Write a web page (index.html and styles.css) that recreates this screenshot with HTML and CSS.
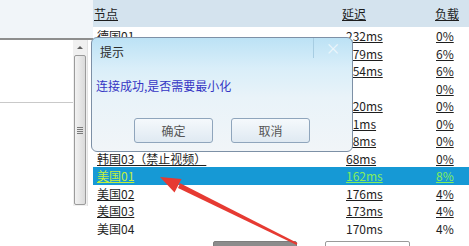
FILE: index.html
```html
<!DOCTYPE html>
<html lang="zh-CN">
<head>
    <meta charset="UTF-8">
    <title>节点列表</title>
    <link rel="stylesheet" href="styles.css">
</head>
<body>
    <div class="app">
        <div class="side">
            <div class="side-top"></div>
            <div class="side-rule"></div>
            <div class="side-body">
                <div class="side-list">
                    <div class="side-item"></div>
                </div>
                <div class="scrollbar">
                    <div class="scroll-up"></div>
                    <div class="scroll-thumb"><span class="grip"></span></div>
                </div>
            </div>
        </div>

        <div class="nodes">
            <div class="nodes-head">
                <span>节点</span>
                <span>延迟</span>
                <span>负载</span>
            </div>
            <div class="row"><span>德国01</span><span>232ms</span><span>0%</span></div>
            <div class="row"><span>德国02</span><span>179ms</span><span>6%</span></div>
            <div class="row"><span>法国01</span><span>154ms</span><span>6%</span></div>
            <div class="row"><span>法国02</span><span></span><span>0%</span></div>
            <div class="row"><span>英国01</span><span>120ms</span><span>0%</span></div>
            <div class="row"><span>韩国01</span><span>71ms</span><span>0%</span></div>
            <div class="row"><span>韩国02</span><span>88ms</span><span>0%</span></div>
            <div class="row"><span>韩国03（禁止视频）</span><span>68ms</span><span>0%</span></div>
            <div class="row selected"><span>美国01</span><span>162ms</span><span>8%</span></div>
            <div class="row"><span>美国02</span><span>176ms</span><span>4%</span></div>
            <div class="row"><span>美国03</span><span>173ms</span><span>4%</span></div>
            <div class="row plain"><span>美国04</span><span>170ms</span><span>4%</span></div>
            <div class="nodes-foot">
                <div class="foot-btn dark"></div>
                <div class="foot-btn"></div>
            </div>
        </div>
    </div>

    <div class="dialog">
        <div class="dialog-title">
            <span class="dialog-caption">提示</span>
            <span class="dialog-close">×</span>
        </div>
        <div class="dialog-msg">连接成功,是否需要最小化</div>
        <div class="dialog-buttons">
            <button class="btn">确定</button>
            <button class="btn">取消</button>
        </div>
    </div>

    <svg class="arrow" width="469" height="246" viewBox="0 0 469 246">
        <polygon points="296.6,245 297.4,243 180.2,183.3 178,188.1" fill="#e63a32"/>
        <polygon points="160,177 181.5,179 174.5,192.5" fill="#e63a32"/>
    </svg>
</body>
</html>
```

FILE: styles.css
```css
body {
    margin: 0;
    width: 469px;
    height: 246px;
    overflow: hidden;
    position: relative;
    background-color: #fff;
    font-family: "Noto Sans CJK SC", "Noto Sans", sans-serif;
    font-size: 12px;
    color: #1e1e1e;
}

.app {
    display: grid;
    grid-template-columns: 93px 1fr;
    height: 246px;
}

/* left panel */
.side-top {
    height: 38px;
    background-color: #f1f5f9;
}

.side-rule {
    height: 2px;
    background-color: #8e8e8e;
}

.side-body {
    display: flex;
}

.side-list {
    width: 73px;
}

.side-item {
    height: 62px;
    border-bottom: 1px solid #c9c9c9;
}

.scrollbar {
    width: 14px;
    height: 166px;
    background-color: #f0f0f0;
    border-right: 1px solid #e2e2e2;
}

.scroll-up {
    height: 15px;
    display: flex;
    justify-content: center;
    align-items: center;
}

.scroll-up::before {
    content: "";
    border-left: 3px solid transparent;
    border-right: 3px solid transparent;
    border-bottom: 3px solid #606060;
}

.scroll-thumb {
    box-sizing: border-box;
    height: 150px;
    margin: 0 1px;
    border: 1px solid #9b9b9b;
    border-radius: 2px;
    background: linear-gradient(to right, #f2f2f2, #dadada);
    display: flex;
    justify-content: center;
    align-items: center;
}

.grip {
    width: 6px;
    height: 7px;
    background: repeating-linear-gradient(to bottom, #7a7a7a 0, #7a7a7a 1px, transparent 1px, transparent 2px);
}

/* node table */
.nodes-head {
    display: grid;
    grid-template-columns: 248px 93px 1fr;
    height: 27px;
    align-items: center;
    padding-left: 1px;
    background-color: #d4e3ee;
}

.nodes-head span,
.row span {
    text-decoration: underline;
}

.row {
    display: grid;
    grid-template-columns: 249px 90px 1fr;
    height: 17.5px;
    line-height: 17.5px;
    padding-left: 4px;
}

.row.plain span {
    text-decoration: none;
}

.row.selected {
    background-color: #1699d5;
    color: #84ee5c;
}

.row.selected span:first-child {
    color: #c4f03a;
}

.nodes-foot {
    display: flex;
    gap: 28px;
    margin-top: 4px;
    padding-left: 120px;
}

.foot-btn {
    box-sizing: border-box;
    width: 85px;
    height: 12px;
    border: 1px solid #9a9a9a;
    border-radius: 2px;
    background-color: #fff;
}

.foot-btn.dark {
    width: 84px;
    background-color: #8c8c8c;
    border-color: #7d7d7d;
}

/* message box */
.dialog {
    position: absolute;
    left: 91px;
    top: 37px;
    width: 262px;
    height: 115px;
    box-sizing: border-box;
    border: 1px solid #7d90a6;
    border-radius: 6px;
    background: linear-gradient(to bottom, #bce2f5 0, #d9eef9 30px, #e9f3f9 60px, #f1f5f8 100%);
}

.dialog-title {
    display: flex;
    justify-content: space-between;
    height: 30px;
}

.dialog-caption {
    padding-left: 8px;
    line-height: 28px;
    color: #2a2a2a;
}

.dialog-close {
    width: 38px;
    height: 20px;
    line-height: 19px;
    text-align: center;
    font-size: 15px;
    color: #eef7fc;
    border-left: 1px solid #a7cde2;
}

.dialog-msg {
    margin-top: 9px;
    padding-left: 4px;
    line-height: 18px;
    color: #3535c4;
}

.dialog-buttons {
    display: flex;
    gap: 18px;
    margin-top: 23px;
    padding-left: 42px;
}

.btn {
    width: 79px;
    height: 25px;
    padding: 0;
    border: 1px solid #8fa5bc;
    border-radius: 3px;
    background: linear-gradient(to bottom, #f5f9fc, #dfe9f2);
    font-family: inherit;
    font-size: 12px;
    color: #555;
}

.arrow {
    position: absolute;
    left: 0;
    top: 0;
}
```
